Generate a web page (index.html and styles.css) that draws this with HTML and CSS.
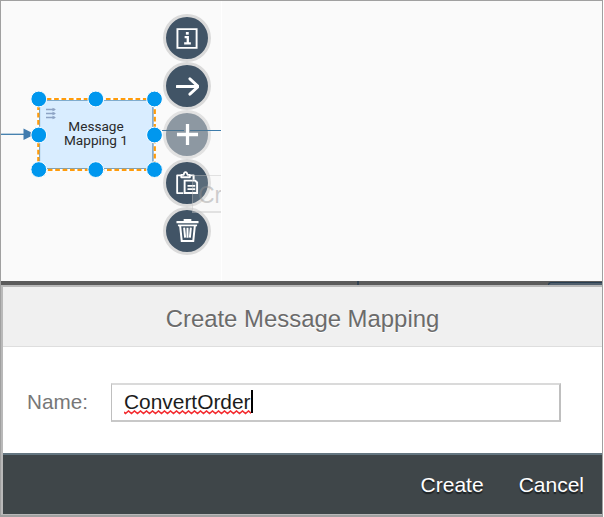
FILE: index.html
```html
<!DOCTYPE html>
<html lang="en">
<head>
<meta charset="utf-8">
<title>Create Message Mapping</title>
<link rel="stylesheet" href="styles.css">
</head>
<body>
<main class="frame">
  <section class="canvas">
    <svg class="diagram" width="222" height="280" viewBox="1 1 222 280">
      <path d="M1 134.3H25" stroke="#3e7cab" stroke-width="1.3"/>
      <path d="M23.5 128.5L35 134.3L23.5 140Z" fill="#427cae"/>
      <rect x="39.5" y="100" width="114" height="68.7" fill="#d9edff" stroke="#4380ad" stroke-width="1.2"/>
      <path d="M153 100V169" stroke="#86add0" stroke-width="2"/>
      <rect x="38.3" y="99" width="116.5" height="70.8" fill="none" stroke="#fff" stroke-width="2"/>
      <rect x="38.3" y="99" width="116.5" height="70.8" fill="none" stroke="#ff9b0a" stroke-width="2.2" stroke-dasharray="4.7 2.7" stroke-dashoffset="-1"/>
      <path d="M46 109.5H55M46 113.5H55M46 117.5H55" fill="none" stroke="#8da3c4" stroke-width="1.3"/>
      <path d="M52.5 107.8L56 109.5L52.5 111.2ZM52.5 111.8L56 113.5L52.5 115.2ZM52.5 115.8L56 117.5L52.5 119.2Z" fill="#8da3c4"/>
      <g fill="#0097ee" stroke="#fff" stroke-width="1">
        <circle cx="38.8" cy="99" r="7.9"/><circle cx="95.8" cy="99" r="7.9"/><circle cx="154.5" cy="99" r="7.9"/>
        <circle cx="38.8" cy="135" r="7.9"/><circle cx="154.5" cy="135" r="7.9"/>
        <circle cx="38.8" cy="169.6" r="7.9"/><circle cx="95.8" cy="169.6" r="7.9"/><circle cx="154.5" cy="169.6" r="7.9"/>
      </g>
    </svg>
    <div class="node-label">Message<br>Mapping 1</div>
    <div class="actions">
      <button class="action" aria-label="Information"><svg viewBox="0 0 24 24"><path d="M1.5 2.2H21.5V21.8H1.5Z" stroke-width="2"/><path d="M9 10.5H12.3V17M8.5 17H15.5" stroke-width="2.4"/><path d="M10.3 6.6H13.3" stroke-width="2.8"/></svg></button>
      <button class="action" aria-label="Connect"><svg viewBox="0 0 24 24"><path d="M1 12H23M14.5 4L23.2 12L14.5 20" stroke-width="3" stroke-linecap="round" stroke-linejoin="round"/></svg></button>
      <button class="action muted" aria-label="Create"><svg viewBox="0 0 24 24"><path d="M1 12H23M12 1V23" stroke-width="3.4"/></svg></button>
      <button class="action" aria-label="Copy"><svg viewBox="0 0 24 24"><path d="M7.5 23H1.2V4.5H5M15 4.5H18.5V9M5.5 6.5V4H8C8.3 2 9 1.2 10 1.2S11.6 2 12 4H14.5V6.5Z" stroke-width="1.9" stroke-linejoin="round"/><path d="M9 10H20L22 12V23H9Z" stroke-width="2"/><path d="M12 15.5H20M12 19H20" stroke-width="1.8"/></svg></button>
      <button class="action" aria-label="Delete"><svg viewBox="0 0 24 24"><path d="M.5 3.2H23.5M8 1.2H16" stroke-width="2.4"/><path d="M2 6.7H22" stroke-width="1.8"/><path d="M4.3 7L6 23H18L19.7 7M8.5 9L9.5 19.5M12 9V19.5M15.5 9L14.5 19.5" stroke-width="2.1"/></svg></button>
    </div>
    <div class="connector"></div>
    <div class="hint">Cr</div>
  </section>
  <div class="backdrop"><span class="backdrop-tab"></span></div>
  <form class="dialog">
    <header class="dialog-title">Create Message Mapping</header>
    <div class="dialog-body">
      <label class="name-label">Name:</label>
      <div class="name-field"><span class="name-value">ConvertOrder</span><svg class="squiggle" width="127" height="5"><defs><pattern id="wave" width="6" height="5" patternUnits="userSpaceOnUse"><path d="M-1.5 1L1.5 3.5L4.5 1L7.5 3.5" fill="none" stroke="#f32a2e" stroke-width="1.6"/></pattern></defs><rect width="127" height="5" fill="url(#wave)"/></svg><span class="caret"></span></div>
    </div>
    <footer class="dialog-footer">
      <button type="button" class="command">Create</button>
      <button type="button" class="command">Cancel</button>
    </footer>
  </form>
</main>
</body>
</html>
```
FILE: styles.css
```css
* { box-sizing: border-box; }
body { margin: 0; background: #fff; font-family: "Liberation Sans", Arial, sans-serif; }
button { margin: 0; padding: 0; border: 0; font: inherit; }
.frame {
  display: flex;
  flex-direction: column;
  width: 603px;
  height: 517px;
  border: 1px solid #a0a0a0;
  border-bottom-width: 2px;
  overflow: hidden;
}
.canvas { position: relative; flex: 0 0 280px; background: #fafafa; }
.canvas::after { content: ""; position: absolute; left: 220px; top: 0; width: 1px; height: 280px; background: #fff; }
.diagram { display: block; }
.node-label {
  position: absolute;
  left: 38px;
  top: 118px;
  width: 114px;
  font: 13.6px/14px Roboto, sans-serif;
  text-align: center;
  color: #2a2a2a;
}
.actions { position: absolute; left: 162px; top: 13px; display: flex; flex-direction: column; }
.action {
  display: grid;
  place-items: center;
  width: 48px;
  height: 48.2px;
  border: 3px solid #dadada;
  border-radius: 50%;
  background: #415466;
}
.action.muted { background: #8d98a2; border-color: #e2e2e2; }
.action svg { width: 23px; height: 23px; fill: none; stroke: #fff; }
.connector {
  position: absolute;
  left: 161px;
  top: 129px;
  width: 59px;
  height: 1px;
  background: linear-gradient(90deg, #3e7cab 4px, #4b7593 4px, #4b7593 22px, transparent 22px, transparent 28px, #4b7593 28px, #4b7593 46px, #3e7cab 46px);
}
.hint {
  position: absolute;
  left: 191px;
  top: 174px;
  width: 29px;
  height: 38px;
  padding-left: 5px;
  border: solid rgba(190, 190, 190, .4);
  border-width: 1px 0 2px 1px;
  background: rgba(250, 250, 250, .14);
  overflow: hidden;
  font-size: 23px;
  line-height: 39px;
  color: rgba(150, 150, 150, .45);
}
.backdrop {
  display: flex;
  flex: 0 0 4px;
  justify-content: flex-end;
  background: linear-gradient(90deg, transparent 356px, #334352 356px, #334352 358px, transparent 358px), #5b5b5b;
}
.backdrop-tab {
  width: 54px;
  margin-top: 1px;
  border: solid #293e51;
  border-width: 1px 0 0 1px;
  border-top-left-radius: 3px;
  background: #505e6b;
}
.dialog {
  display: flex;
  flex: 1;
  flex-direction: column;
  border: solid #b9b9b9;
  border-width: 2px 0 1px 2px;
  background: #fff;
}
.dialog-title {
  flex: 0 0 60px;
  padding-top: 4px;
  border-bottom: 1px solid #dedede;
  background: #f0f0f0;
  font-size: 23.9px;
  line-height: 55px;
  text-align: center;
  color: #6b6b6b;
  text-shadow: 0 1px #fff;
}
.dialog-body { display: flex; flex: 0 0 106px; align-items: flex-start; padding: 36px 41px 0 24px; }
.name-label { width: 84px; font-size: 20.7px; line-height: 37px; color: #777; }
.name-field {
  position: relative;
  display: flex;
  flex: 1;
  height: 39px;
  padding-left: 12px;
  border: solid;
  border-width: 2px 2px 2px 1px;
  border-color: #dadada #bfbfbf #c8c8c8 #bfbfbf;
  font-size: 20.9px;
  line-height: 34px;
  color: #1c1c1c;
}
.caret { width: 2px; height: 23px; margin-top: 5px; background: #000; }
.squiggle { position: absolute; left: 12px; top: 25px; }
.dialog-footer {
  display: flex;
  flex: 1;
  justify-content: flex-end;
  gap: 35px;
  padding-right: 18px;
  border-top: 2px solid #647681;
  background: #3f4649;
}
.command { background: none; color: #fff; font-size: 21px; line-height: 56px; text-shadow: 0 2px 1px #1c2022; }
```
